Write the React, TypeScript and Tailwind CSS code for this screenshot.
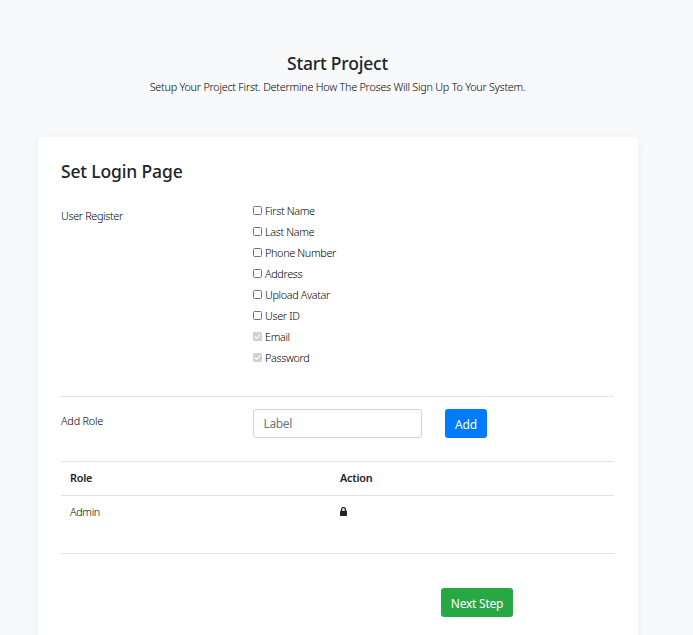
import React from "react";

const fields = [
  { label: "First Name", locked: false },
  { label: "Last Name", locked: false },
  { label: "Phone Number", locked: false },
  { label: "Address", locked: false },
  { label: "Upload Avatar", locked: false },
  { label: "User ID", locked: false },
  { label: "Email", locked: true },
  { label: "Password", locked: true },
];

function Checkbox({ locked }: { locked: boolean }) {
  if (locked) {
    return (
      <svg width="9" height="9" viewBox="0 0 9 9" className="shrink-0">
        <rect width="9" height="9" rx="1.3" fill="#d1d1d1" />
        <path d="M1.8 4.7 3.6 6.4 7.2 2.5" fill="none" stroke="#fafafa" strokeWidth="1.2" />
      </svg>
    );
  }
  return <span className="h-[9px] w-[9px] shrink-0 rounded-[1.5px] border border-[#767676] bg-white" />;
}

export default function App() {
  return (
    <main className="flex h-[635px] w-[693px] flex-col overflow-hidden bg-[#f8f9fb] font-['Noto_Sans',sans-serif] text-[10.8px] leading-[21px] font-light tracking-[-0.34px] text-black">
      <header className="flex h-[137px] w-[675px] shrink-0 flex-col items-center pt-[51px] whitespace-nowrap">
        <h1 className="text-[17.5px] leading-[24px] font-medium tracking-[-0.2px] text-[#212529]">Start Project</h1>
        <p className="mt-[2px] leading-[20px] tracking-[-0.235px]">
          Setup Your Project First. Determine How The Proses Will Sign Up To Your System.
        </p>
      </header>

      <section className="ml-[38px] h-[530px] w-[600px] shrink-0 rounded-[4px] bg-white px-[23px] pt-[21px] shadow-[0_2px_8px_rgba(0,0,0,0.06)]">
        <div className="w-[553px]">
          <h2 className="text-[17.5px] leading-[26px] font-medium tracking-[-0.15px] text-[#212529]">Set Login Page</h2>

          <div className="mt-[16px] flex h-[196px]">
            <div className="w-[192px] pt-[5px]">User Register</div>
            <div className="flex flex-col">
              {fields.map((f) => (
                <label key={f.label} className="flex h-[21px] items-center gap-[3px] whitespace-nowrap">
                  <Checkbox locked={f.locked} />
                  <span>{f.label}</span>
                </label>
              ))}
            </div>
          </div>

          <div className="flex h-[65px] border-t border-[#e3e3e4] pt-[12px]">
            <div className="w-[192px] pt-px tracking-[-0.2px]">Add Role</div>
            <input
              placeholder="Label"
              className="h-[29px] w-[169px] rounded-[3px] border border-[#ced4da] px-[9.5px] text-[12px] font-normal tracking-[-0.35px] placeholder:text-[#6c757d] placeholder:opacity-100"
            />
            <button className="ml-[23px] h-[29px] w-[42px] rounded-[3px] bg-[#007bff] pt-[2px] text-[12px] font-normal tracking-[-0.2px] text-white">
              Add
            </button>
          </div>

          <div className="grid h-[34px] grid-cols-[270px_1fr] items-start border-t border-[#dee2e6] pt-[5px] pl-[9px] font-semibold tracking-[-0.2px] text-[#212529]">
            <span>Role</span>
            <span>Action</span>
          </div>
          <div className="grid h-[58px] grid-cols-[270px_1fr] items-start border-t border-[#dee2e6] pt-[5px] pl-[9px]">
            <span>Admin</span>
            <svg width="7" height="9" viewBox="0 0 7 9" className="mt-[6px]">
              <path d="M1.6 4V2.5a1.9 1.9 0 0 1 3.8 0V4" fill="none" stroke="#212529" strokeWidth="1.3" />
              <rect y="3.7" width="7" height="5.3" rx=".7" fill="#212529" />
            </svg>
          </div>
          <div className="flex border-t border-[#e3e3e4] pt-[34px] pl-[380px]">
            <button className="h-[29px] w-[72px] rounded-[3px] bg-[#28a745] pt-[2px] text-[12px] font-normal tracking-[-0.25px] whitespace-nowrap text-white">
              Next Step
            </button>
          </div>
        </div>
      </section>
    </main>
  );
}
